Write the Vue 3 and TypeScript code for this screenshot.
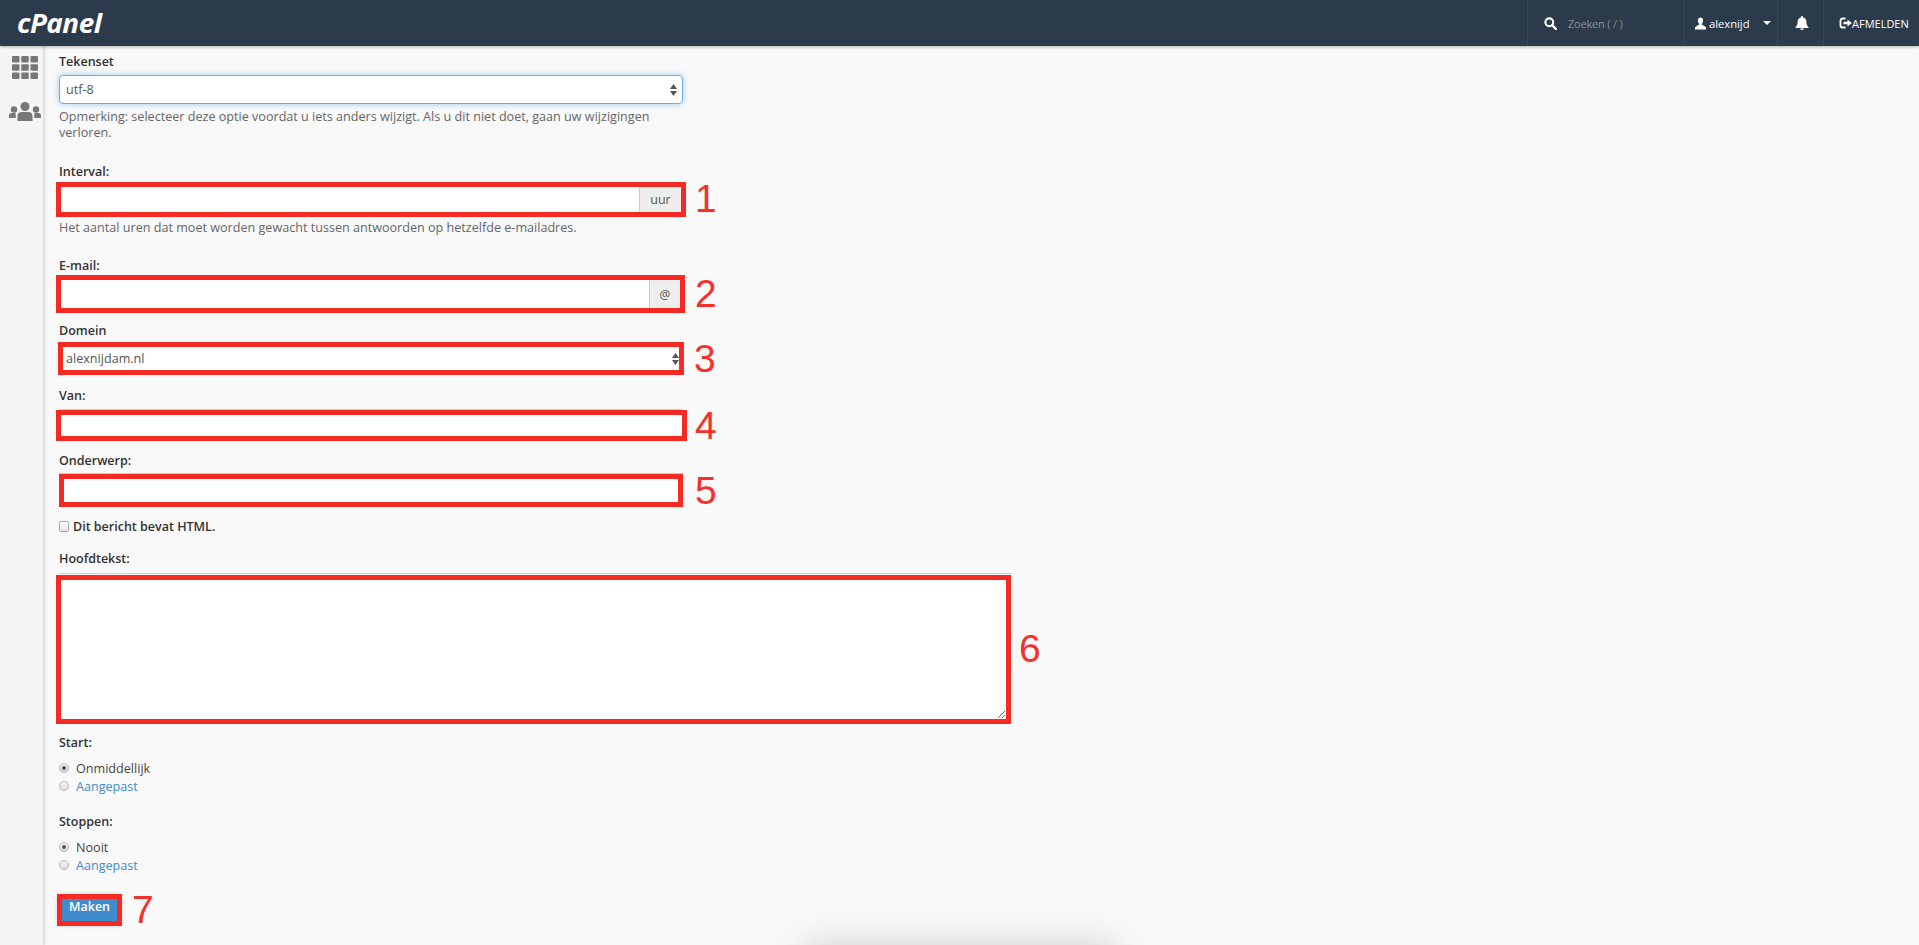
<script setup lang="ts">
interface RadioOption { text: string; checked: boolean }
const startOptions: RadioOption[] = [
  { text: 'Onmiddellijk', checked: true },
  { text: 'Aangepast', checked: false },
]
const stopOptions: RadioOption[] = [
  { text: 'Nooit', checked: true },
  { text: 'Aangepast', checked: false },
]
</script>

<template>
  <div class="page">
    <header class="topbar">
      <div class="logo-box"><span class="logo">cPanel</span></div>
      <div class="top-search">
        <svg class="ic-search" viewBox="0 0 14 14" aria-hidden="true">
          <circle cx="5.7" cy="5.7" r="4.2" fill="none" stroke="#fff" stroke-width="2.2" />
          <path d="M8.8 8.8 L13 13" stroke="#fff" stroke-width="2.6" stroke-linecap="round" />
        </svg>
        <span class="search-text">Zoeken ( / )</span>
      </div>
      <div class="top-user">
        <svg class="ic-user" viewBox="0 0 12 13" aria-hidden="true">
          <path d="M6 0C4.2 0 3.2 1.3 3.2 3.2c0 1.5.6 2.8 1.5 3.5v1L1.5 9.4C.5 10 0 10.5 0 11.4V13h12v-1.6c0-.9-.5-1.4-1.5-2L7.3 7.7v-1c.9-.7 1.5-2 1.5-3.5C8.8 1.3 7.8 0 6 0z" fill="#fff" />
        </svg>
        <span class="user-name">alexnijd</span>
        <span class="caret"></span>
      </div>
      <div class="top-bell">
        <svg class="ic-bell" viewBox="0 0 14 14" aria-hidden="true">
          <path d="M7 0c-.6 0-1 .4-1 1v.5C3.8 2 2.6 3.8 2.6 6c0 2.6-.8 4-2.1 5.2v.8h13v-.8C12.200 10 11.400 8.600 11.400 6c0-2.200-1.200-4-3.400-4.500V1c0-.6-.4-1-1-1z" fill="#fff" />
          <path d="M5.200 12.500a1.800 1.500 0 0 0 3.600 0z" fill="#fff" />
        </svg>
      </div>
      <div class="top-logout">
        <svg class="ic-logout" viewBox="0 0 13 12" aria-hidden="true">
          <path d="M6.500 1.500H3.500a2 2 0 0 0-2 2v5a2 2 0 0 0 2 2h3" fill="none" stroke="#fff" stroke-width="1.800" />
          <path d="M4.500 4.700h4V2.500L12.800 6 8.500 9.500V7.300h-4z" fill="#fff" />
        </svg>
        <span class="logout-text">AFMELDEN</span>
      </div>
    </header>

    <div class="body-row">
      <aside class="sidebar">
        <svg class="ic-grid" viewBox="0 0 26 23" aria-hidden="true">
          <g fill="#777">
            <rect x="0" y="0" width="7.500" height="6.500" rx="1" />
            <rect x="9.250" y="0" width="7.500" height="6.500" rx="1" />
            <rect x="18.500" y="0" width="7.500" height="6.500" rx="1" />
            <rect x="0" y="8.250" width="7.500" height="6.500" rx="1" />
            <rect x="9.250" y="8.250" width="7.500" height="6.500" rx="1" />
            <rect x="18.500" y="8.250" width="7.500" height="6.500" rx="1" />
            <rect x="0" y="16.500" width="7.500" height="6.500" rx="1" />
            <rect x="9.250" y="16.500" width="7.500" height="6.500" rx="1" />
            <rect x="18.500" y="16.500" width="7.500" height="6.500" rx="1" />
          </g>
        </svg>
        <svg class="ic-users" viewBox="0 0 32 19" aria-hidden="true">
          <g fill="#777">
            <circle cx="16" cy="4.500" r="4.500" />
            <path d="M8.500 19v-5c0-2.500 2-4 4-4h7c2 0 4 1.500 4 4v5z" />
            <circle cx="5" cy="7.500" r="3.200" />
            <path d="M0 16v-2.500c0-1.500 1-2.500 2.500-2.500h4.300A6 6 0 0 0 6.800 14v2z" />
            <circle cx="27" cy="7.500" r="3.200" />
            <path d="M32 16v-2.500c0-1.500-1-2.500-2.500-2.500h-4.300a6 6 0 0 1 0 3v2z" />
          </g>
        </svg>
      </aside>

      <main class="content">
        <label class="label">Tekenset</label>
        <div class="select-wrap focus-select">
          <select class="plain-select"><option>utf-8</option></select>
          <svg class="arrows" viewBox="0 0 7 12" aria-hidden="true">
            <path d="M3.500 0 7 5H0zM3.500 12 0 7h7z" fill="#555" />
          </svg>
        </div>
        <p class="help note">Opmerking: selecteer deze optie voordat u iets anders wijzigt. Als u dit niet doet, gaan uw wijzigingen verloren.</p>

        <label class="label interval-label">Interval:</label>
        <div class="annot-row">
          <div class="mark mark-1">
            <input class="plain-input" type="text" />
            <span class="addon addon-uur">uur</span>
          </div>
          <span class="digit">1</span>
        </div>
        <p class="help help-one">Het aantal uren dat moet worden gewacht tussen antwoorden op hetzelfde e-mailadres.</p>

        <label class="label email-label">E-mail:</label>
        <div class="annot-row">
          <div class="mark mark-2">
            <input class="plain-input" type="text" />
            <span class="addon addon-at">@</span>
          </div>
          <span class="digit digit-2">2</span>
        </div>

        <label class="label domein-label">Domein</label>
        <div class="annot-row domein-row">
          <div class="mark mark-3 select-wrap">
            <select class="plain-select"><option>alexnijdam.nl</option></select>
            <svg class="arrows" viewBox="0 0 7 12" aria-hidden="true">
              <path d="M3.500 0 7 5H0zM3.500 12 0 7h7z" fill="#555" />
            </svg>
          </div>
          <span class="digit digit-3">3</span>
        </div>

        <label class="label van-label">Van:</label>
        <div class="edge van-edge"></div>
        <div class="annot-row">
          <div class="mark mark-4"><input class="plain-input" type="text" /></div>
          <span class="digit digit-4">4</span>
        </div>

        <label class="label onderwerp-label">Onderwerp:</label>
        <div class="edge onderwerp-edge"></div>
        <div class="annot-row">
          <div class="mark mark-5"><input class="plain-input" type="text" /></div>
          <span class="digit digit-5">5</span>
        </div>

        <label class="check-row">
          <input class="check" type="checkbox" />
          <span>Dit bericht bevat HTML.</span>
        </label>

        <label class="label hoofd-label">Hoofdtekst:</label>
        <div class="edge hoofd-edge"></div>
        <div class="annot-row">
          <div class="mark mark-6"><textarea class="plain-area"></textarea></div>
          <span class="digit digit-6">6</span>
        </div>

        <label class="label start-label">Start:</label>
        <div class="radios">
          <div v-for="opt in startOptions" :key="opt.text" class="radio-row">
            <span class="radio" :class="{ on: opt.checked }"></span>
            <span :class="{ link: !opt.checked }">{{ opt.text }}</span>
          </div>
        </div>

        <label class="label stop-label">Stoppen:</label>
        <div class="radios">
          <div v-for="opt in stopOptions" :key="opt.text" class="radio-row">
            <span class="radio" :class="{ on: opt.checked }"></span>
            <span :class="{ link: !opt.checked }">{{ opt.text }}</span>
          </div>
        </div>

        <div class="annot-row button-row">
          <button class="submit" type="button">Maken</button>
          <span class="digit digit-7">7</span>
        </div>
      </main>
    </div>
    <div class="offscreen-toast"></div>
  </div>
</template>

<style scoped>
.page {
  position: relative;
  display: flex;
  flex-direction: column;
  height: 945px;
  overflow: hidden;
  background: #f9f9f9;
  font-family: "Open Sans", "Noto Sans", sans-serif;
  font-size: 12.6px;
  color: #333;
}

/* top bar */
.topbar {
  position: relative;
  z-index: 2;
  flex: none;
  display: flex;
  align-items: center;
  height: 46px;
  background: #2c3b4b;
  box-shadow: 0 1px 3px rgba(0, 0, 0, 0.3);
  color: #fff;
}
.logo-box {
  flex: 1;
  padding-left: 17px;
}
.logo {
  display: inline-block;
  font-family: "Open Sans", sans-serif;
  font-style: italic;
  font-weight: 700;
  font-size: 27px;
  letter-spacing: -0.5px;
  line-height: 46px;
  color: #fff;
  transform: scaleX(1.03);
  transform-origin: left center;
}
.top-search,
.top-user,
.top-bell,
.top-logout {
  flex: none;
  display: flex;
  align-items: center;
  box-sizing: border-box;
  height: 46px;
  border-left: 1px solid #37475a;
}
.top-search {
  width: 156px;
  padding-left: 16px;
}
.ic-search {
  width: 13px;
  height: 13px;
  margin-right: 11px;
}
.search-text {
  font-size: 11px;
  letter-spacing: -0.2px;
  color: #8b9096;
  white-space: nowrap;
}
.top-user {
  width: 94px;
  padding-left: 11px;
  font-size: 11.2px;
}
.ic-user {
  width: 11px;
  height: 13px;
  margin-right: 3px;
}
.user-name {
  color: #fff;
}
.caret {
  width: 0;
  height: 0;
  margin-left: 13px;
  border-left: 4px solid transparent;
  border-right: 4px solid transparent;
  border-top: 4px solid #fff;
}
.top-bell {
  width: 46px;
  padding-left: 17px;
}
.ic-bell {
  width: 14px;
  height: 14px;
}
.top-logout {
  width: 96px;
  padding-left: 15px;
}
.ic-logout {
  width: 13px;
  height: 12px;
}
.logout-text {
  font-size: 11px;
  font-weight: 500;
}

/* body */
.body-row {
  flex: 1;
  display: flex;
  min-height: 0;
}
.sidebar {
  flex: none;
  display: flex;
  flex-direction: column;
  align-items: center;
  width: 44px;
  padding-top: 10px;
  box-sizing: border-box;
  background: #f5f5f5;
  border-right: 1px solid #dedede;
  box-shadow: 1px 0 3px rgba(0, 0, 0, 0.12);
}
.ic-grid {
  width: 26px;
  height: 23px;
  margin-left: 7px;
}
.ic-users {
  width: 32px;
  height: 19px;
  margin-top: 23px;
  margin-left: 6px;
}
.content {
  flex: 1;
  padding: 7px 0 0 15px;
}

/* shared form parts */
.label {
  display: block;
  height: 18px;
  line-height: 18px;
  font-size: 12.5px;
  font-weight: 600;
  color: #333;
}
.help {
  margin: 0;
  width: 624px;
  line-height: 16px;
  font-size: 12.6px;
  color: #666;
}
.note {
  margin-top: 5px;
}
.help-one {
  margin-top: 3px;
}
.select-wrap {
  position: relative;
  box-sizing: border-box;
  background: #fff;
}
.focus-select {
  width: 624px;
  height: 29px;
  margin-top: 4px;
  border: 1px solid #66afe9;
  border-radius: 4px;
  box-shadow: 0 0 6px rgba(102, 175, 233, 0.6);
}
.plain-select {
  appearance: none;
  display: block;
  width: 100%;
  height: 100%;
  padding: 0 6px;
  border: 0;
  outline: 0;
  background: transparent;
  font: inherit;
  font-size: 12.6px;
  color: #555;
}
.arrows {
  position: absolute;
  right: 5px;
  top: 50%;
  width: 7px;
  height: 12px;
  margin-top: -6px;
}
.annot-row {
  display: flex;
  align-items: center;
}
.mark {
  flex: none;
  display: flex;
  box-sizing: border-box;
  border: 5px solid #f52a22;
  background: #fff;
}
.plain-input {
  flex: 1;
  min-width: 0;
  padding: 0 6px;
  border: 0;
  outline: 0;
  background: #fff;
}
.addon {
  flex: none;
  display: flex;
  align-items: center;
  justify-content: center;
  box-sizing: border-box;
  background: #eee;
  border-left: 1px solid #ccc;
  color: #555;
}
.addon-uur {
  width: 42px;
  font-size: 12.5px;
}
.addon-at {
  width: 31px;
  font-size: 12px;
}
.digit {
  flex: none;
  height: 28px;
  margin-left: 9px;
  font-family: "Liberation Sans", Arial, sans-serif;
  font-size: 39px;
  line-height: 28px;
  color: #f5312b;
}

/* field by field placement */
.interval-label {
  margin-top: 22px;
}
.mark-1 {
  width: 630px;
  height: 35px;
  margin-top: 1px;
  margin-left: -3px;
}
.email-label {
  margin-top: 21px;
}
.mark-2 {
  width: 629px;
  height: 38px;
  margin-left: -3px;
}
.digit-2 {
  margin-left: 10px;
}
.domein-label {
  margin-top: 9px;
}
.domein-row {
  margin-top: 2px;
}
.mark-3 {
  width: 626px;
  height: 33px;
  margin-left: -1px;
}
.mark-3 .plain-select {
  padding: 0 3px;
}
.mark-3 .arrows {
  right: 0;
}
.digit-3 {
  margin-left: 10px;
}
.van-label {
  margin-top: 12px;
}
.edge {
  width: 624px;
  height: 1px;
  background: #ccc;
}
.van-edge {
  margin-top: 4px;
}
.mark-4 {
  width: 631px;
  height: 31px;
  margin-left: -3px;
}
.digit-4 {
  margin-left: 8px;
}
.onderwerp-label {
  margin-top: 11px;
}
.onderwerp-edge {
  margin-top: 3px;
}
.mark-5 {
  width: 624px;
  height: 33px;
}
.digit-5 {
  margin-left: 12px;
}
.check-row {
  display: flex;
  align-items: center;
  height: 18px;
  margin-top: 10px;
  font-size: 12.5px;
  font-weight: 600;
}
.check {
  appearance: none;
  width: 10px;
  height: 11px;
  margin: 0 4px 0 0;
  border: 1px solid #aaa;
  border-radius: 2px;
  background: linear-gradient(#fff, #e6e6e6);
}
.hoofd-label {
  margin-top: 15px;
}
.hoofd-edge {
  width: 952px;
  margin-top: 5px;
}
.mark-6 {
  width: 955px;
  height: 149px;
  margin-top: 1px;
  margin-left: -3px;
}
.plain-area {
  flex: 1;
  border: 0;
  outline: 0;
  background: #fff;
  resize: both;
}
.digit-6 {
  margin-left: 8px;
}
.start-label {
  margin-top: 10px;
}
.stop-label {
  margin-top: 18px;
}
.radios {
  margin-top: 7px;
}
.radio-row {
  display: flex;
  align-items: center;
  height: 18px;
  color: #444;
}
.radio {
  position: relative;
  flex: none;
  box-sizing: border-box;
  width: 10px;
  height: 10px;
  margin-right: 7px;
  border: 1px solid #b5b5b5;
  border-radius: 50%;
  background: linear-gradient(#f4f4f4, #dcdcdc);
}
.radio.on::after {
  content: "";
  position: absolute;
  left: 2px;
  top: 2px;
  width: 4px;
  height: 4px;
  border-radius: 50%;
  background: #555;
}
.link {
  color: #428bca;
}
.button-row {
  margin-top: 20px;
}
.submit {
  flex: none;
  box-sizing: border-box;
  width: 65px;
  height: 32px;
  margin-left: -2px;
  padding: 0 0 6px;
  border: 5px solid #f52a22;
  background: #428bca;
  font: inherit;
  font-size: 12.5px;
  font-weight: 600;
  line-height: 16px;
  color: #fff;
  box-shadow: 0 0 4px rgba(0, 0, 0, 0.15);
}
.digit-7 {
  margin-left: 10px;
}

/* toast sitting just below the visible page, only its shadow shows */
.offscreen-toast {
  position: absolute;
  left: 805px;
  top: 948px;
  width: 310px;
  height: 40px;
  box-shadow: 0 0 40px rgba(0, 0, 0, 0.2);
}
</style>

<style>
body {
  background: #f9f9f9;
}
</style>
